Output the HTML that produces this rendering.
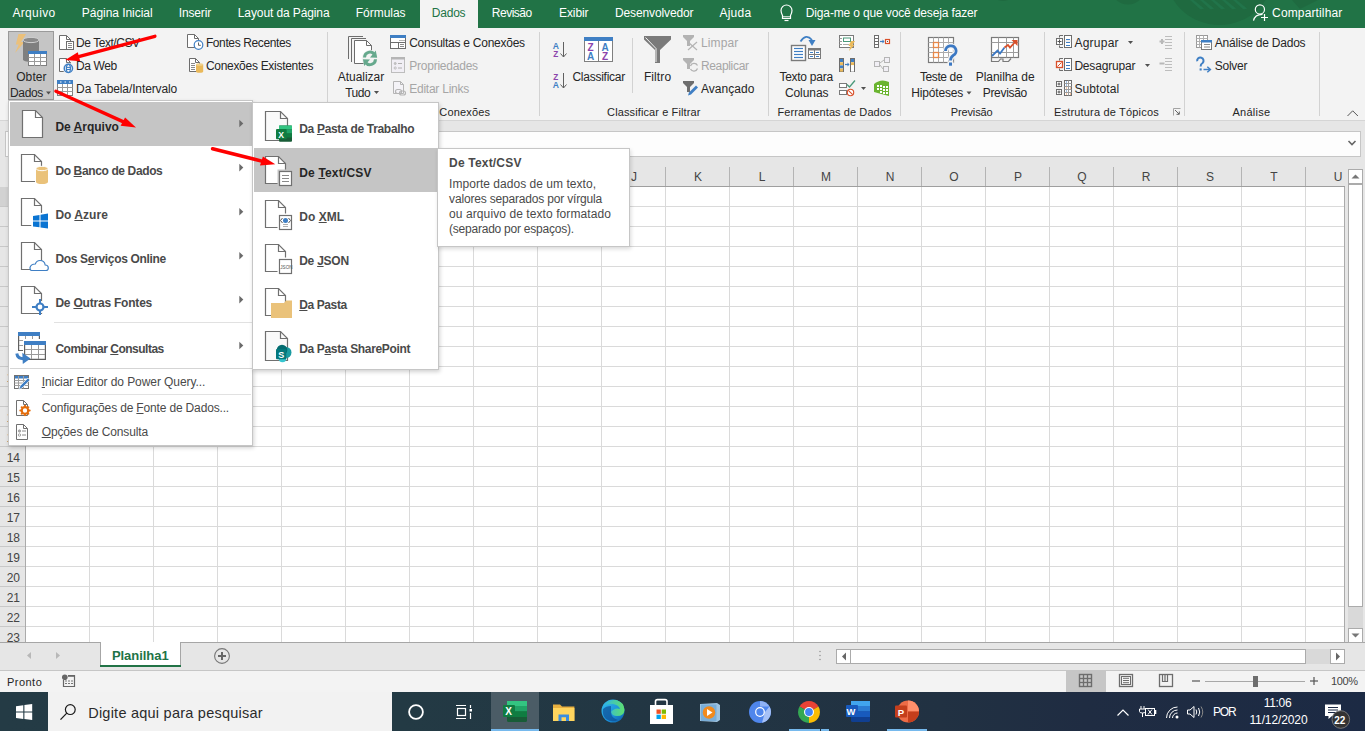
<!DOCTYPE html>
<html><head><meta charset="utf-8"><title>Excel</title><style>
*{margin:0;padding:0;box-sizing:border-box}
html,body{width:1365px;height:731px;overflow:hidden;background:#fff}
body{position:relative;font-family:"Liberation Sans",sans-serif;font-size:12px;color:#262626}
.a{position:absolute}
.t{position:absolute;white-space:nowrap;line-height:1}
svg{position:absolute;overflow:visible}
u{text-decoration:underline;text-underline-offset:1px;text-decoration-thickness:1px}
</style></head>
<body>
<div class="a" style="left:0px;top:0px;width:1365px;height:28px;background:#217346"></div>
<svg style="left:0;top:0" width="1365" height="27" viewBox="0 0 1365 27"><circle cx="1219.5" cy="-30" r="55" fill="#1f6a40"/><path d="M1190 0H1193.5L1204 8.5Q1202 9.5 1200 9Z" fill="#21744a"/><path d="M1200 0H1203.5L1214 8.5Q1212 9.5 1210 9Z" fill="#21744a"/><path d="M1211 0H1214.5L1225 8.5Q1223 9.5 1221 9Z" fill="#21744a"/><path d="M1222 0H1225.5L1236 8.5Q1234 9.5 1232 9Z" fill="#21744a"/><path d="M1233 0H1236.5L1247 8.5Q1245 9.5 1243 9Z" fill="#21744a"/><circle cx="1128" cy="-13" r="17.5" fill="#1f6a40"/><circle cx="1003" cy="-12" r="13" fill="#1f6a40"/><path d="M1292 0H1318L1300 9Z" fill="#1f6a40"/><path d="M782.5 15.5Q781 12.5 781 10.5A5.5 5.5 0 0 1 792 10.5Q792 12.5 790.5 15.5V18.5H782.5Z" fill="none" stroke="#fff" stroke-width="1.2"/><line x1="783" y1="16.8" x2="790" y2="16.8" stroke="#fff" stroke-width="1"/><line x1="784.5" y1="20.5" x2="788.5" y2="20.5" stroke="#fff" stroke-width="1.2"/><circle cx="1259.9" cy="9.4" r="4.6" fill="none" stroke="#fff" stroke-width="1.2"/><path d="M1253.5 20.7Q1254.5 14.5 1262.5 14.3" fill="none" stroke="#fff" stroke-width="1.2"/><path d="M1261 17.5H1268M1264.5 14V21" stroke="#fff" stroke-width="1.2"/></svg>
<div class="a" style="left:420px;top:0px;width:58px;height:28px;background:#f3f3f3"></div>
<div class="t" style="left:12.40px;top:7.33px;font-size:12px;color:#fff;letter-spacing:0.352px">Arquivo</div>
<div class="t" style="left:81.80px;top:7.33px;font-size:12px;color:#fff;letter-spacing:-0.045px">Página Inicial</div>
<div class="t" style="left:178.80px;top:7.33px;font-size:12px;color:#fff;letter-spacing:-0.157px">Inserir</div>
<div class="t" style="left:237.80px;top:7.33px;font-size:12px;color:#fff;letter-spacing:-0.108px">Layout da Página</div>
<div class="t" style="left:355.80px;top:7.33px;font-size:12px;color:#fff;letter-spacing:-0.031px">Fórmulas</div>
<div class="t" style="left:491.80px;top:7.33px;font-size:12px;color:#fff;letter-spacing:-0.493px">Revisão</div>
<div class="t" style="left:559.00px;top:7.33px;font-size:12px;color:#fff;letter-spacing:-0.083px">Exibir</div>
<div class="t" style="left:615.00px;top:7.33px;font-size:12px;color:#fff;letter-spacing:-0.121px">Desenvolvedor</div>
<div class="t" style="left:719.40px;top:7.33px;font-size:12px;color:#fff;letter-spacing:0.274px">Ajuda</div>
<div class="t" style="left:805.80px;top:7.33px;font-size:12px;color:#fff;letter-spacing:-0.144px">Diga-me o que você deseja fazer</div>
<div class="t" style="left:1272.10px;top:7.33px;font-size:12px;color:#fff;letter-spacing:0.136px">Compartilhar</div>
<div class="t" style="left:431.80px;top:7.33px;font-size:12px;color:#217346;letter-spacing:-0.222px">Dados</div>
<div class="a" style="left:0px;top:28px;width:1365px;height:92px;background:#f3f3f3"></div>
<div class="a" style="left:0px;top:120px;width:1365px;height:1px;background:#d5d5d5"></div>
<div class="a" style="left:8px;top:31px;width:46px;height:69px;background:#c5c5c5;border:1px solid #9a9a9a"></div>
<div class="t" style="left:16.20px;top:70.63px;font-size:12px;letter-spacing:0.096px">Obter</div>
<div class="t" style="left:10.10px;top:86.73px;font-size:12px;letter-spacing:-0.397px">Dados</div>
<div class="t" style="left:76.10px;top:37.03px;font-size:12px;letter-spacing:-0.458px">De Text/CSV</div>
<div class="t" style="left:76.10px;top:59.73px;font-size:12px;letter-spacing:-0.408px">Da Web</div>
<div class="t" style="left:76.10px;top:82.53px;font-size:12px;letter-spacing:-0.110px">Da Tabela/Intervalo</div>
<div class="t" style="left:205.90px;top:37.03px;font-size:12px;letter-spacing:-0.387px">Fontes Recentes</div>
<div class="t" style="left:205.90px;top:59.73px;font-size:12px;letter-spacing:-0.291px">Conexões Existentes</div>
<div class="t" style="left:337.70px;top:70.63px;font-size:12px;letter-spacing:-0.023px">Atualizar</div>
<div class="t" style="left:345.20px;top:86.73px;font-size:12px;letter-spacing:-0.502px">Tudo</div>
<div class="t" style="left:409.20px;top:37.03px;font-size:12px;letter-spacing:-0.255px">Consultas e Conexões</div>
<div class="t" style="left:409.20px;top:59.73px;font-size:12px;color:#a6a6a6;letter-spacing:-0.226px">Propriedades</div>
<div class="t" style="left:409.20px;top:82.53px;font-size:12px;color:#a6a6a6;letter-spacing:-0.237px">Editar Links</div>
<div class="t" style="left:376.40px;top:106.66px;font-size:11px;letter-spacing:0.153px">Consultas e Conexões</div>
<div class="t" style="left:572.40px;top:70.63px;font-size:12px;letter-spacing:-0.244px">Classificar</div>
<div class="t" style="left:643.90px;top:70.63px;font-size:12px;letter-spacing:0.106px">Filtro</div>
<div class="t" style="left:700.90px;top:37.03px;font-size:12px;color:#a6a6a6;letter-spacing:0.143px">Limpar</div>
<div class="t" style="left:700.90px;top:59.73px;font-size:12px;color:#a6a6a6;letter-spacing:-0.325px">Reaplicar</div>
<div class="t" style="left:700.90px;top:82.53px;font-size:12px;letter-spacing:0.049px">Avançado</div>
<div class="t" style="left:607.10px;top:106.66px;font-size:11px;letter-spacing:0.111px">Classificar e Filtrar</div>
<div class="t" style="left:779.40px;top:70.63px;font-size:12px;letter-spacing:-0.261px">Texto para</div>
<div class="t" style="left:784.90px;top:86.73px;font-size:12px;letter-spacing:-0.055px">Colunas</div>
<div class="t" style="left:777.40px;top:106.66px;font-size:11px;letter-spacing:0.084px">Ferramentas de Dados</div>
<div class="t" style="left:919.90px;top:70.63px;font-size:12px;letter-spacing:-0.382px">Teste de</div>
<div class="t" style="left:911.20px;top:86.73px;font-size:12px;letter-spacing:-0.159px">Hipóteses</div>
<div class="t" style="left:975.70px;top:70.63px;font-size:12px;letter-spacing:-0.049px">Planilha de</div>
<div class="t" style="left:982.70px;top:86.73px;font-size:12px;letter-spacing:-0.298px">Previsão</div>
<div class="t" style="left:950.70px;top:106.66px;font-size:11px;letter-spacing:-0.114px">Previsão</div>
<div class="t" style="left:1074.40px;top:37.03px;font-size:12px;letter-spacing:0.249px">Agrupar</div>
<div class="t" style="left:1074.40px;top:59.73px;font-size:12px;letter-spacing:-0.189px">Desagrupar</div>
<div class="t" style="left:1074.40px;top:82.53px;font-size:12px;letter-spacing:0.122px">Subtotal</div>
<div class="t" style="left:1054.00px;top:106.66px;font-size:11px;letter-spacing:0.179px">Estrutura de Tópicos</div>
<div class="t" style="left:1214.80px;top:37.03px;font-size:12px;letter-spacing:-0.218px">Análise de Dados</div>
<div class="t" style="left:1214.80px;top:59.73px;font-size:12px;letter-spacing:-0.263px">Solver</div>
<div class="t" style="left:1232.40px;top:106.66px;font-size:11px;letter-spacing:0.287px">Análise</div>
<div class="a" style="left:327px;top:32px;width:1px;height:84px;background:#d2d2d2"></div>
<div class="a" style="left:539px;top:32px;width:1px;height:84px;background:#d2d2d2"></div>
<div class="a" style="left:768px;top:32px;width:1px;height:84px;background:#d2d2d2"></div>
<div class="a" style="left:900px;top:32px;width:1px;height:84px;background:#d2d2d2"></div>
<div class="a" style="left:1044px;top:32px;width:1px;height:84px;background:#d2d2d2"></div>
<div class="a" style="left:1184px;top:32px;width:1px;height:84px;background:#d2d2d2"></div>
<div class="a" style="left:1319px;top:32px;width:1px;height:84px;background:#d2d2d2"></div>
<div class="a" style="left:632px;top:38px;width:1px;height:55px;background:#d2d2d2"></div>
<svg style="left:0;top:27px" width="1365" height="93" viewBox="0 27 1365 93"><path d="M18.5 34H26L21 42H24.5L15 53L18.7 44.5H15.8Z" fill="#ebc07a"/><path d="M23 40V59.5A8 2.5 0 0 0 39 59.5V40Z" fill="#7f7f7f"/><ellipse cx="31" cy="40" rx="8" ry="2.6" fill="#8a8a8a" stroke="#cfcfcf" stroke-width="1"/><rect x="28.5" y="51.5" width="18" height="14" fill="#fff" stroke="#7f7f7f" stroke-width="1"/><rect x="28" y="51" width="19" height="3" fill="#3f7fc4"/><line x1="34.5" y1="54" x2="34.5" y2="66" stroke="#9a9a9a" stroke-width="1" stroke-linecap="butt"/><line x1="40.5" y1="54" x2="40.5" y2="66" stroke="#9a9a9a" stroke-width="1" stroke-linecap="butt"/><line x1="28.5" y1="57.5" x2="46.5" y2="57.5" stroke="#9a9a9a" stroke-width="1" stroke-linecap="butt"/><line x1="28.5" y1="61.5" x2="46.5" y2="61.5" stroke="#9a9a9a" stroke-width="1" stroke-linecap="butt"/><path d="M46.0 91.5H51.0L48.5 94.5Z" fill="#505050"/><path d="M59.5 35.5H66.5L70.5 39.5V49.5H59.5Z" fill="#fff" stroke="#6d6d6d" stroke-width="1"/><path d="M66.5 35.5V39.5H70.5" fill="none" stroke="#6d6d6d" stroke-width="1"/><rect x="66.5" y="41.5" width="7" height="8" fill="#fff" stroke="#6d6d6d" stroke-width="1"/><line x1="68" y1="43.5" x2="72" y2="43.5" stroke="#8a8a8a" stroke-width="1" stroke-linecap="butt"/><line x1="68" y1="45.5" x2="72" y2="45.5" stroke="#8a8a8a" stroke-width="1" stroke-linecap="butt"/><line x1="68" y1="47.5" x2="72" y2="47.5" stroke="#8a8a8a" stroke-width="1" stroke-linecap="butt"/><path d="M59.5 58.5H66.5L70.5 62.5V71.5H59.5Z" fill="#fff" stroke="#6d6d6d" stroke-width="1"/><path d="M66.5 58.5V62.5H70.5" fill="none" stroke="#6d6d6d" stroke-width="1"/><circle cx="68.4" cy="68.4" r="5.6" fill="#f3f3f3"/><circle cx="68.4" cy="68.4" r="4.1" fill="#fff" stroke="#3f7fc4" stroke-width="1.5"/><ellipse cx="68.4" cy="68.4" rx="2" ry="4.1" fill="none" stroke="#3f7fc4" stroke-width="1.2"/><line x1="66" y1="67.4" x2="70.8" y2="67.4" stroke="#3f7fc4" stroke-width="1.1" stroke-linecap="butt"/><line x1="66" y1="69.5" x2="70.8" y2="69.5" stroke="#3f7fc4" stroke-width="1.1" stroke-linecap="butt"/><rect x="57.5" y="80.5" width="15" height="15" fill="#fff" stroke="#7f7f7f" stroke-width="1"/><rect x="57" y="80" width="16" height="4" fill="#3f7fc4"/><rect x="60" y="81.5" width="1.5" height="1" fill="#fff"/><rect x="64.5" y="81.5" width="1.5" height="1" fill="#fff"/><rect x="69" y="81.5" width="1.5" height="1" fill="#fff"/><line x1="62.5" y1="84" x2="62.5" y2="96" stroke="#9a9a9a" stroke-width="1" stroke-linecap="butt"/><line x1="67.5" y1="84" x2="67.5" y2="96" stroke="#9a9a9a" stroke-width="1" stroke-linecap="butt"/><line x1="57.5" y1="87.5" x2="72.5" y2="87.5" stroke="#9a9a9a" stroke-width="1" stroke-linecap="butt"/><line x1="57.5" y1="91.5" x2="72.5" y2="91.5" stroke="#9a9a9a" stroke-width="1" stroke-linecap="butt"/><path d="M187.5 34.5H194.5L198.5 38.5V47.5H187.5Z" fill="#fff" stroke="#6d6d6d" stroke-width="1"/><path d="M194.5 34.5V38.5H198.5" fill="none" stroke="#6d6d6d" stroke-width="1"/><circle cx="198.5" cy="45" r="4.3" fill="#fff" stroke="#3f7fc4" stroke-width="1.2"/><path d="M198.5 42.5V45.3H200.8" fill="none" stroke="#505050" stroke-width="0.9"/><path d="M189.5 58.5H195.5L199.5 62.5V71.5H189.5Z" fill="#fff" stroke="#6d6d6d" stroke-width="1"/><path d="M195.5 58.5V62.5H199.5" fill="none" stroke="#6d6d6d" stroke-width="1"/><line x1="191" y1="63.5" x2="195" y2="63.5" stroke="#8a8a8a" stroke-width="1" stroke-linecap="butt"/><line x1="191" y1="65.5" x2="195" y2="65.5" stroke="#8a8a8a" stroke-width="1" stroke-linecap="butt"/><line x1="191" y1="67.5" x2="195" y2="67.5" stroke="#8a8a8a" stroke-width="1" stroke-linecap="butt"/><line x1="191" y1="69.5" x2="195" y2="69.5" stroke="#8a8a8a" stroke-width="1" stroke-linecap="butt"/><path d="M196 64.5V71.5A3.6 1.3 0 0 0 203.2 71.5V64.5Z" fill="#eab95a"/><ellipse cx="199.6" cy="64.5" rx="3.6" ry="1.3" fill="#f0d08a"/><path d="M348.5 59V36.5H363" fill="none" stroke="#6d6d6d" stroke-width="1"/><path d="M351.5 62V38.5H366" fill="none" stroke="#6d6d6d" stroke-width="1"/><path d="M354.5 40.5H366.5L371.5 45.5V63.5H354.5Z" fill="#fff" stroke="#6d6d6d" stroke-width="1"/><path d="M366.5 40.5V45.5H371.5" fill="none" stroke="#6d6d6d" stroke-width="1"/><circle cx="370" cy="58.4" r="8.3" fill="#f3f3f3"/><path d="M364.5 57.5A5.5 5.5 0 0 1 374.5 54.5" fill="none" stroke="#66a98d" stroke-width="3"/><path d="M375.8 50.5L377.2 57.8L370 57.6Z" fill="#66a98d"/><path d="M375.5 59.3A5.5 5.5 0 0 1 365.5 62.3" fill="none" stroke="#66a98d" stroke-width="3"/><path d="M364.2 66L362.9 59.2L370 59.4Z" fill="#66a98d"/><path d="M374.0 91.0H379.0L376.5 94.0Z" fill="#505050"/><rect x="390.5" y="35.5" width="15" height="13" fill="#fff" stroke="#6d6d6d" stroke-width="1"/><rect x="390" y="35" width="16" height="3" fill="#3f7fc4"/><line x1="390.5" y1="42.5" x2="405.5" y2="42.5" stroke="#6d6d6d" stroke-width="1" stroke-linecap="butt"/><line x1="398.5" y1="42.5" x2="398.5" y2="48.5" stroke="#6d6d6d" stroke-width="1" stroke-linecap="butt"/><rect x="399.5" y="40" width="1" height="1" fill="#6d6d6d"/><rect x="401.5" y="40" width="1" height="1" fill="#6d6d6d"/><rect x="403.5" y="40" width="1" height="1" fill="#6d6d6d"/><line x1="400" y1="44.5" x2="404" y2="44.5" stroke="#8a8a8a" stroke-width="1" stroke-linecap="butt"/><line x1="400" y1="46.5" x2="404" y2="46.5" stroke="#8a8a8a" stroke-width="1" stroke-linecap="butt"/><rect x="391.5" y="57.5" width="13" height="15" fill="#f1eff5" stroke="#bdbdbd" stroke-width="1"/><rect x="391" y="57" width="14" height="2.5" fill="#b5b5b5"/><circle cx="395.2" cy="63.5" r="1.1" fill="#c3c3c3" stroke="#b0b0b0" stroke-width=".6"/><circle cx="395.2" cy="68" r="1.1" fill="none" stroke="#b0b0b0" stroke-width=".8"/><line x1="398" y1="63.5" x2="402" y2="63.5" stroke="#b0b0b0" stroke-width="1" stroke-linecap="butt"/><line x1="398" y1="68" x2="402" y2="68" stroke="#b0b0b0" stroke-width="1" stroke-linecap="butt"/><path d="M393.5 81.5H400.5L403.5 84.5V93.5H393.5Z" fill="#f4f3f7" stroke="#b5b5b5" stroke-width="1"/><path d="M400.5 81.5V84.5H403.5" fill="none" stroke="#b5b5b5" stroke-width="1"/><rect x="395.5" y="89.5" width="6" height="4" rx="2" fill="none" stroke="#b5b5b5" stroke-width="1.2"/><rect x="399.5" y="91" width="6" height="4" rx="2" fill="none" stroke="#b5b5b5" stroke-width="1.2"/><text x="552.8" y="48.8" font-family="Liberation Sans" font-size="8.6" font-weight="700" fill="#3f7fc4">A</text><text x="553.2" y="56.9" font-family="Liberation Sans" font-size="8.2" font-weight="700" fill="#8b44ac">Z</text><line x1="563.5" y1="42" x2="563.5" y2="57" stroke="#606060" stroke-width="1" stroke-linecap="butt"/><path d="M560.5 53.5L563.5 57L566.5 53.5" fill="none" stroke="#606060"/><text x="553.2" y="79.6" font-family="Liberation Sans" font-size="8.2" font-weight="700" fill="#8b44ac">Z</text><text x="552.8" y="87.7" font-family="Liberation Sans" font-size="8.6" font-weight="700" fill="#3f7fc4">A</text><line x1="563.5" y1="73" x2="563.5" y2="88" stroke="#606060" stroke-width="1" stroke-linecap="butt"/><path d="M560.5 84.5L563.5 88L566.5 84.5" fill="none" stroke="#606060"/><rect x="584.5" y="37.5" width="28" height="24" fill="#fff" stroke="#7f7f7f" stroke-width="1"/><rect x="584" y="37" width="29" height="4" fill="#3f7fc4"/><line x1="598.5" y1="41" x2="598.5" y2="61.5" stroke="#7f7f7f" stroke-width="1" stroke-linecap="butt"/><text x="587.5" y="50.5" font-family="Liberation Sans" font-size="10" font-weight="700" fill="#8b44ac">Z</text><text x="587" y="60" font-family="Liberation Sans" font-size="10" font-weight="700" fill="#3f7fc4">A</text><text x="601.5" y="50.5" font-family="Liberation Sans" font-size="10" font-weight="700" fill="#3f7fc4">A</text><text x="602" y="60" font-family="Liberation Sans" font-size="10" font-weight="700" fill="#8b44ac">Z</text><path d="M644 36H671V39.5L660 50V63H655V50L644 39.5Z" fill="#7a7a7a"/><path d="M645.5 37.5L656 48.5V62" fill="none" stroke="#fff" stroke-width="0.9"/><path d="M683 35H694V37L690 41V46H687V41L683 37Z" fill="#b3b3b3"/><line x1="688" y1="42" x2="697" y2="50" stroke="#b3b3b3" stroke-width="1.2" stroke-linecap="butt"/><line x1="697" y1="42" x2="688" y2="50" stroke="#b3b3b3" stroke-width="1.2" stroke-linecap="butt"/><path d="M683 58H694V60L690 64V69H687V64L683 60Z" fill="#b3b3b3"/><path d="M690.5 66A3.8 3.8 0 0 1 697.5 65.5M697.5 68.5A3.8 3.8 0 0 1 690.5 69" fill="none" stroke="#b3b3b3" stroke-width="1.3"/><path d="M683 81H694V83L690 87V92H687V87L683 83Z" fill="#6d6d6d"/><path d="M689 92.5L696 85.5L698 87.5L691 94.5L688 95.5Z" fill="#3f7fc4"/><rect x="791.5" y="45.5" width="14" height="15" fill="#fff" stroke="#7a7a7a" stroke-width="1.4"/><line x1="794" y1="48.5" x2="803" y2="48.5" stroke="#3f7fc4" stroke-width="1.2" stroke-linecap="butt"/><line x1="794" y1="51.5" x2="803" y2="51.5" stroke="#3f7fc4" stroke-width="1.2" stroke-linecap="butt"/><line x1="794" y1="54.5" x2="803" y2="54.5" stroke="#3f7fc4" stroke-width="1.2" stroke-linecap="butt"/><line x1="794" y1="57.5" x2="803" y2="57.5" stroke="#3f7fc4" stroke-width="1.2" stroke-linecap="butt"/><rect x="808.5" y="48.5" width="12" height="10" fill="#fff" stroke="#7a7a7a" stroke-width="1"/><rect x="808" y="48" width="13" height="2.5" fill="#7a7a7a"/><line x1="814.5" y1="50" x2="814.5" y2="58.5" stroke="#7a7a7a" stroke-width="1" stroke-linecap="butt"/><line x1="808.5" y1="54.5" x2="820.5" y2="54.5" stroke="#7a7a7a" stroke-width="1" stroke-linecap="butt"/><line x1="810" y1="52.5" x2="813" y2="52.5" stroke="#3f7fc4" stroke-width="1" stroke-linecap="butt"/><line x1="816" y1="52.5" x2="819" y2="52.5" stroke="#3f7fc4" stroke-width="1" stroke-linecap="butt"/><line x1="810" y1="56.5" x2="813" y2="56.5" stroke="#3f7fc4" stroke-width="1" stroke-linecap="butt"/><line x1="816" y1="56.5" x2="819" y2="56.5" stroke="#3f7fc4" stroke-width="1" stroke-linecap="butt"/><path d="M800.5 41.5Q806 33 812 40" fill="none" stroke="#3f7fc4" stroke-width="1.8"/><path d="M808.5 40L812 46L815.5 40Z" fill="#3f7fc4"/><rect x="839.5" y="35.5" width="14" height="12" fill="#fff" stroke="#7a7a7a" stroke-width="1"/><line x1="839.5" y1="38.5" x2="842" y2="38.5" stroke="#9a9a9a" stroke-width="1" stroke-linecap="butt"/><line x1="839.5" y1="41.5" x2="842" y2="41.5" stroke="#9a9a9a" stroke-width="1" stroke-linecap="butt"/><line x1="839.5" y1="44.5" x2="842" y2="44.5" stroke="#9a9a9a" stroke-width="1" stroke-linecap="butt"/><rect x="843.5" y="38" width="7" height="3.5" fill="none" stroke="#4a9a7a" stroke-width="1"/><line x1="843" y1="44.5" x2="849" y2="44.5" stroke="#aaaaaa" stroke-width="1" stroke-linecap="butt"/><path d="M851 41H855L852.5 45H854.5L849 51L850.5 46H848.5Z" fill="#eab95a"/><rect x="839.5" y="58.5" width="4" height="13" fill="#fff" stroke="#6d6d6d" stroke-width="1"/><rect x="840" y="59.0" width="3" height="3" fill="#3f7fc4"/><rect x="840" y="62.2" width="3" height="3" fill="#eab95a"/><rect x="840" y="65.4" width="3" height="3" fill="#3f7fc4"/><rect x="840" y="68.6" width="3" height="3" fill="#eab95a"/><rect x="850.5" y="58.5" width="4" height="13" fill="#fff" stroke="#6d6d6d" stroke-width="1"/><rect x="851" y="59.0" width="3" height="3" fill="#3f7fc4"/><rect x="851" y="62.2" width="3" height="3" fill="#eab95a"/><rect x="851" y="65.4" width="3" height="3" fill="#fff"/><rect x="851" y="68.6" width="3" height="3" fill="#fff"/><line x1="845" y1="64.5" x2="849" y2="64.5" stroke="#3f7fc4" stroke-width="1.2" stroke-linecap="butt"/><path d="M847.5 62.5L849.5 64.5L847.5 66.5Z" fill="#3f7fc4"/><rect x="839.5" y="83.5" width="7" height="4" fill="#fff" stroke="#7a7a7a" stroke-width="1"/><rect x="839.5" y="90.5" width="7" height="4" fill="#fff" stroke="#7a7a7a" stroke-width="1"/><path d="M847 84.5L849.5 87L855 80.5" fill="none" stroke="#4a9a7a" stroke-width="1.3"/><circle cx="850.5" cy="92.5" r="3.2" fill="#fff" stroke="#d9502a" stroke-width="1.1"/><line x1="848.3" y1="90.3" x2="852.7" y2="94.7" stroke="#d9502a" stroke-width="1.1" stroke-linecap="butt"/><path d="M861.0 87.0H866.0L863.5 90.0Z" fill="#505050"/><rect x="874.5" y="35.5" width="4" height="12" fill="#fff" stroke="#6d6d6d" stroke-width="1"/><line x1="874.5" y1="38.5" x2="878.5" y2="38.5" stroke="#6d6d6d" stroke-width="1" stroke-linecap="butt"/><line x1="874.5" y1="41.5" x2="878.5" y2="41.5" stroke="#6d6d6d" stroke-width="1" stroke-linecap="butt"/><line x1="874.5" y1="44.5" x2="878.5" y2="44.5" stroke="#6d6d6d" stroke-width="1" stroke-linecap="butt"/><line x1="880" y1="41.5" x2="884" y2="41.5" stroke="#3f7fc4" stroke-width="1.2" stroke-linecap="butt"/><path d="M882.5 39.5L884.5 41.5L882.5 43.5Z" fill="#3f7fc4"/><rect x="885.5" y="39.5" width="4" height="4" fill="#fff" stroke="#d9502a" stroke-width="1.2"/><rect x="887" y="41" width="1" height="1" fill="#555"/><rect x="874.5" y="61.5" width="5" height="5" fill="#f1eff5" stroke="#b5b5b5" stroke-width="1"/><rect x="884.5" y="57.5" width="5" height="5" fill="#f1eff5" stroke="#b5b5b5" stroke-width="1"/><rect x="883.5" y="66.5" width="5" height="5" fill="#f1eff5" stroke="#b5b5b5" stroke-width="1"/><line x1="880" y1="63" x2="884" y2="60" stroke="#b5b5b5" stroke-width="1" stroke-linecap="butt"/><line x1="880" y1="65" x2="883" y2="69" stroke="#b5b5b5" stroke-width="1" stroke-linecap="butt"/><path d="M874 84Q881 78 889 82V96Q881 94 874 92Z" fill="#6ab42f"/><rect x="877" y="85" width="2" height="2" fill="#fff"/><rect x="880" y="85" width="2" height="2" fill="#fff"/><rect x="883" y="86" width="2" height="2" fill="#fff"/><rect x="886" y="86" width="2" height="2" fill="#fff"/><rect x="877" y="88" width="2" height="2" fill="#fff"/><rect x="880" y="88" width="2" height="2" fill="#fff"/><rect x="883" y="89" width="2" height="2" fill="#fff"/><rect x="886" y="89" width="2" height="2" fill="#fff"/><rect x="880" y="91" width="2" height="2" fill="#fff"/><rect x="883" y="92" width="2" height="2" fill="#fff"/><rect x="886" y="92" width="2" height="2" fill="#fff"/><rect x="928.5" y="37.5" width="25" height="25" fill="#fff" stroke="#7a7a7a" stroke-width="1.2"/><line x1="933.5" y1="37.5" x2="933.5" y2="62.5" stroke="#ababab" stroke-width="1" stroke-linecap="butt"/><line x1="938.5" y1="37.5" x2="938.5" y2="62.5" stroke="#ababab" stroke-width="1" stroke-linecap="butt"/><line x1="943.5" y1="37.5" x2="943.5" y2="62.5" stroke="#ababab" stroke-width="1" stroke-linecap="butt"/><line x1="948.5" y1="37.5" x2="948.5" y2="62.5" stroke="#ababab" stroke-width="1" stroke-linecap="butt"/><line x1="928.5" y1="42.5" x2="953.5" y2="42.5" stroke="#ababab" stroke-width="1" stroke-linecap="butt"/><line x1="928.5" y1="47.5" x2="953.5" y2="47.5" stroke="#ababab" stroke-width="1" stroke-linecap="butt"/><line x1="928.5" y1="52.5" x2="953.5" y2="52.5" stroke="#ababab" stroke-width="1" stroke-linecap="butt"/><line x1="928.5" y1="57.5" x2="953.5" y2="57.5" stroke="#ababab" stroke-width="1" stroke-linecap="butt"/><rect x="933.5" y="42.5" width="5" height="5" fill="#fff" stroke="#e8894a" stroke-width="1.3"/><rect x="933.5" y="52.5" width="5" height="5" fill="#fff" stroke="#e8894a" stroke-width="1.3"/><path d="M945.5 51A5.3 5 0 1 1 953.3 55.3Q950.5 57.3 950.5 60.5" fill="none" stroke="#f3f3f3" stroke-width="5.5"/><rect x="947.5" y="61.5" width="6" height="5" fill="#f3f3f3"/><path d="M945.5 51A5.3 5 0 1 1 953.3 55.3Q950.5 57.3 950.5 60.5" fill="none" stroke="#3b78c3" stroke-width="2.8"/><rect x="949" y="62.5" width="3" height="3.2" fill="#3b78c3"/><path d="M966.5 91.5H971.5L969 94.5Z" fill="#505050"/><rect x="991.5" y="37.5" width="27" height="20" fill="#fff" stroke="#7a7a7a" stroke-width="1.2"/><line x1="998.5" y1="37.5" x2="998.5" y2="57.5" stroke="#9d9d9d" stroke-width="1" stroke-linecap="butt"/><line x1="1006.5" y1="37.5" x2="1006.5" y2="57.5" stroke="#9d9d9d" stroke-width="1" stroke-linecap="butt"/><line x1="1013.5" y1="37.5" x2="1013.5" y2="57.5" stroke="#9d9d9d" stroke-width="1" stroke-linecap="butt"/><line x1="991.5" y1="42.5" x2="1018.5" y2="42.5" stroke="#9d9d9d" stroke-width="1" stroke-linecap="butt"/><line x1="991.5" y1="52.5" x2="1018.5" y2="52.5" stroke="#9d9d9d" stroke-width="1" stroke-linecap="butt"/><path d="M991.5 58V61.5H998.5L1000.5 59H1003V61.5H1008.5L1011 58.5" fill="none" stroke="#7a7a7a" stroke-width="1.2"/><path d="M992 56L997.5 50.5L1000 53.5L1004.5 47.5" fill="none" stroke="#3b78c3" stroke-width="1.8"/><path d="M1004.5 47.5L1008 45L1010 47.5L1016 41" fill="none" stroke="#d9502a" stroke-width="1.8"/><path d="M1011.5 40H1017.5V46Z" fill="#d9502a"/><rect x="1056.5" y="38.5" width="6" height="6" fill="#fff" stroke="#6d6d6d" stroke-width="1"/><line x1="1057.5" y1="41.5" x2="1061.5" y2="41.5" stroke="#555" stroke-width="1" stroke-linecap="butt"/><line x1="1059.5" y1="39.5" x2="1059.5" y2="43.5" stroke="#555" stroke-width="1" stroke-linecap="butt"/><path d="M1059.5 37.5V35.5H1063M1059.5 45.5V47.5H1063" fill="none" stroke="#6d6d6d"/><rect x="1064.5" y="35.5" width="7" height="12" fill="#fff" stroke="#6d6d6d" stroke-width="1"/><line x1="1066" y1="39.5" x2="1070" y2="39.5" stroke="#3f7fc4" stroke-width="1" stroke-linecap="butt"/><line x1="1066" y1="42.5" x2="1070" y2="42.5" stroke="#3f7fc4" stroke-width="1" stroke-linecap="butt"/><line x1="1066" y1="45.5" x2="1070" y2="45.5" stroke="#3f7fc4" stroke-width="1" stroke-linecap="butt"/><line x1="1064.5" y1="41.0" x2="1071.5" y2="41.0" stroke="#bbb" stroke-width="0.5" stroke-linecap="butt"/><path d="M1128.0 41.0H1133.0L1130.5 44.0Z" fill="#505050"/><rect x="1056.5" y="61.5" width="6" height="6" fill="#fff" stroke="#d9502a" stroke-width="1.3"/><line x1="1057.5" y1="66.5" x2="1061.5" y2="62.5" stroke="#d9502a" stroke-width="1" stroke-linecap="butt"/><path d="M1059.5 60.5V58.5H1063M1059.5 68.5V70.5H1063" fill="none" stroke="#6d6d6d"/><rect x="1064.5" y="58.5" width="7" height="12" fill="#fff" stroke="#6d6d6d" stroke-width="1"/><line x1="1066" y1="62.5" x2="1070" y2="62.5" stroke="#3f7fc4" stroke-width="1" stroke-linecap="butt"/><line x1="1066" y1="65.5" x2="1070" y2="65.5" stroke="#3f7fc4" stroke-width="1" stroke-linecap="butt"/><line x1="1066" y1="68.5" x2="1070" y2="68.5" stroke="#3f7fc4" stroke-width="1" stroke-linecap="butt"/><path d="M1145.0 64.0H1150.0L1147.5 67.0Z" fill="#505050"/><rect x="1056.5" y="81.5" width="5" height="5" fill="#fff" stroke="#6d6d6d" stroke-width="1"/><line x1="1057.5" y1="84" x2="1060.5" y2="84" stroke="#555" stroke-width="1" stroke-linecap="butt"/><line x1="1059" y1="82.5" x2="1059" y2="85.5" stroke="#555" stroke-width="1" stroke-linecap="butt"/><rect x="1056.5" y="89.5" width="5" height="5" fill="#fff" stroke="#6d6d6d" stroke-width="1"/><line x1="1057.5" y1="92" x2="1060.5" y2="92" stroke="#555" stroke-width="1" stroke-linecap="butt"/><line x1="1059" y1="90.5" x2="1059" y2="93.5" stroke="#555" stroke-width="1" stroke-linecap="butt"/><rect x="1064.5" y="80.5" width="7" height="15" fill="#fff" stroke="#6d6d6d" stroke-width="1"/><line x1="1068.5" y1="80.5" x2="1068.5" y2="95.5" stroke="#9d9d9d" stroke-width="1" stroke-linecap="butt"/><line x1="1064.5" y1="83.5" x2="1071.5" y2="83.5" stroke="#9d9d9d" stroke-width="1" stroke-linecap="butt"/><line x1="1064.5" y1="86.5" x2="1071.5" y2="86.5" stroke="#9d9d9d" stroke-width="1" stroke-linecap="butt"/><line x1="1064.5" y1="89.5" x2="1071.5" y2="89.5" stroke="#9d9d9d" stroke-width="1" stroke-linecap="butt"/><line x1="1064.5" y1="92.5" x2="1071.5" y2="92.5" stroke="#9d9d9d" stroke-width="1" stroke-linecap="butt"/><rect x="1066" y="81.5" width="1" height="1" fill="#3f7fc4"/><rect x="1066" y="84.5" width="1" height="1" fill="#3f7fc4"/><rect x="1066" y="87.5" width="1" height="1" fill="#e8894a"/><rect x="1070" y="87.5" width="1" height="1" fill="#e8894a"/><rect x="1066" y="90.5" width="1" height="1" fill="#3f7fc4"/><rect x="1066" y="93.5" width="1" height="1" fill="#e8894a"/><rect x="1070" y="93.5" width="1" height="1" fill="#e8894a"/><line x1="1159.5" y1="41.5" x2="1164.5" y2="41.5" stroke="#b8b8b8" stroke-width="2" stroke-linecap="butt"/><line x1="1162" y1="39" x2="1162" y2="44" stroke="#b8b8b8" stroke-width="2" stroke-linecap="butt"/><line x1="1165" y1="36.5" x2="1172" y2="36.5" stroke="#bdbdbd" stroke-width="1" stroke-linecap="butt"/><line x1="1165" y1="39.5" x2="1172" y2="39.5" stroke="#bdbdbd" stroke-width="1" stroke-linecap="butt"/><line x1="1165" y1="42.5" x2="1172" y2="42.5" stroke="#bdbdbd" stroke-width="1" stroke-linecap="butt"/><line x1="1165" y1="45.5" x2="1172" y2="45.5" stroke="#bdbdbd" stroke-width="1" stroke-linecap="butt"/><line x1="1165" y1="48.5" x2="1172" y2="48.5" stroke="#bdbdbd" stroke-width="1" stroke-linecap="butt"/><line x1="1159.5" y1="63.5" x2="1164.5" y2="63.5" stroke="#b8b8b8" stroke-width="2" stroke-linecap="butt"/><line x1="1165" y1="58.5" x2="1172" y2="58.5" stroke="#bdbdbd" stroke-width="1" stroke-linecap="butt"/><line x1="1165" y1="61.5" x2="1172" y2="61.5" stroke="#bdbdbd" stroke-width="1" stroke-linecap="butt"/><line x1="1165" y1="64.5" x2="1172" y2="64.5" stroke="#bdbdbd" stroke-width="1" stroke-linecap="butt"/><line x1="1165" y1="67.5" x2="1172" y2="67.5" stroke="#bdbdbd" stroke-width="1" stroke-linecap="butt"/><line x1="1165" y1="70.5" x2="1172" y2="70.5" stroke="#bdbdbd" stroke-width="1" stroke-linecap="butt"/><path d="M1173.5 115.5V108.5H1180.5" fill="none" stroke="#9a9a9a" stroke-width=".9"/><line x1="1175" y1="110" x2="1179" y2="114" stroke="#555" stroke-width="0.9" stroke-linecap="butt"/><path d="M1176.5 114.3H1179.3V111.5" fill="none" stroke="#555" stroke-width=".9"/><rect x="1196.5" y="35.5" width="11" height="12" fill="#fff" stroke="#9a9a9a" stroke-width="1"/><line x1="1199.5" y1="35.5" x2="1199.5" y2="47.5" stroke="#b0b0b0" stroke-width="1" stroke-linecap="butt"/><line x1="1203.5" y1="35.5" x2="1203.5" y2="47.5" stroke="#b0b0b0" stroke-width="1" stroke-linecap="butt"/><line x1="1196.5" y1="38.5" x2="1207.5" y2="38.5" stroke="#b0b0b0" stroke-width="1" stroke-linecap="butt"/><line x1="1196.5" y1="41.5" x2="1207.5" y2="41.5" stroke="#b0b0b0" stroke-width="1" stroke-linecap="butt"/><line x1="1196.5" y1="44.5" x2="1207.5" y2="44.5" stroke="#b0b0b0" stroke-width="1" stroke-linecap="butt"/><rect x="1201.5" y="40.5" width="10" height="9" fill="#fff" stroke="#7a7a7a" stroke-width="1"/><rect x="1201" y="40" width="11" height="2.5" fill="#3f7fc4"/><line x1="1204" y1="44.5" x2="1210" y2="44.5" stroke="#8a8a8a" stroke-width="1" stroke-linecap="butt"/><line x1="1204" y1="47" x2="1210" y2="47" stroke="#8a8a8a" stroke-width="1" stroke-linecap="butt"/><path d="M1197.2 61.3A3.2 3.2 0 1 1 1202.6 63Q1200.6 64.2 1200.6 66.5" fill="none" stroke="#3f7fc4" stroke-width="2"/><rect x="1199.6" y="68.4" width="2.1" height="2.1" fill="#3f7fc4"/><line x1="1203.5" y1="69.5" x2="1210" y2="69.5" stroke="#3f7fc4" stroke-width="1.5" stroke-linecap="butt"/><path d="M1207.3 66.7L1210.4 69.5L1207.3 72.3" fill="none" stroke="#3f7fc4" stroke-width="1.5"/><path d="M1347.5 116L1352.7 110.8L1357.9 116" fill="none" stroke="#555" stroke-width="1"/></svg>
<div class="a" style="left:0px;top:121px;width:1365px;height:36px;background:#e6e6e6"></div>
<div class="a" style="left:5px;top:131px;width:1356px;height:26px;background:#fdfdfd;border:1px solid #c6c6c6"></div>
<div class="a" style="left:0px;top:157px;width:1345px;height:30px;background:#e6e6e6"></div>
<div class="a" style="left:26px;top:186px;width:1319px;height:1px;background:#9f9f9f"></div>
<div class="a" style="left:89px;top:167px;width:1px;height:19px;background:#b4b4b4"></div>
<div class="t" style="left:26px;width:64px;text-align:center;top:171.33px;font-size:12px;color:#444">A</div>
<div class="a" style="left:153px;top:167px;width:1px;height:19px;background:#b4b4b4"></div>
<div class="t" style="left:90px;width:64px;text-align:center;top:171.33px;font-size:12px;color:#444">B</div>
<div class="a" style="left:217px;top:167px;width:1px;height:19px;background:#b4b4b4"></div>
<div class="t" style="left:154px;width:64px;text-align:center;top:171.33px;font-size:12px;color:#444">C</div>
<div class="a" style="left:281px;top:167px;width:1px;height:19px;background:#b4b4b4"></div>
<div class="t" style="left:218px;width:64px;text-align:center;top:171.33px;font-size:12px;color:#444">D</div>
<div class="a" style="left:345px;top:167px;width:1px;height:19px;background:#b4b4b4"></div>
<div class="t" style="left:282px;width:64px;text-align:center;top:171.33px;font-size:12px;color:#444">E</div>
<div class="a" style="left:409px;top:167px;width:1px;height:19px;background:#b4b4b4"></div>
<div class="t" style="left:346px;width:64px;text-align:center;top:171.33px;font-size:12px;color:#444">F</div>
<div class="a" style="left:473px;top:167px;width:1px;height:19px;background:#b4b4b4"></div>
<div class="t" style="left:410px;width:64px;text-align:center;top:171.33px;font-size:12px;color:#444">G</div>
<div class="a" style="left:537px;top:167px;width:1px;height:19px;background:#b4b4b4"></div>
<div class="t" style="left:474px;width:64px;text-align:center;top:171.33px;font-size:12px;color:#444">H</div>
<div class="a" style="left:601px;top:167px;width:1px;height:19px;background:#b4b4b4"></div>
<div class="t" style="left:538px;width:64px;text-align:center;top:171.33px;font-size:12px;color:#444">I</div>
<div class="a" style="left:665px;top:167px;width:1px;height:19px;background:#b4b4b4"></div>
<div class="t" style="left:602px;width:64px;text-align:center;top:171.33px;font-size:12px;color:#444">J</div>
<div class="a" style="left:729px;top:167px;width:1px;height:19px;background:#b4b4b4"></div>
<div class="t" style="left:666px;width:64px;text-align:center;top:171.33px;font-size:12px;color:#444">K</div>
<div class="a" style="left:793px;top:167px;width:1px;height:19px;background:#b4b4b4"></div>
<div class="t" style="left:730px;width:64px;text-align:center;top:171.33px;font-size:12px;color:#444">L</div>
<div class="a" style="left:857px;top:167px;width:1px;height:19px;background:#b4b4b4"></div>
<div class="t" style="left:794px;width:64px;text-align:center;top:171.33px;font-size:12px;color:#444">M</div>
<div class="a" style="left:921px;top:167px;width:1px;height:19px;background:#b4b4b4"></div>
<div class="t" style="left:858px;width:64px;text-align:center;top:171.33px;font-size:12px;color:#444">N</div>
<div class="a" style="left:985px;top:167px;width:1px;height:19px;background:#b4b4b4"></div>
<div class="t" style="left:922px;width:64px;text-align:center;top:171.33px;font-size:12px;color:#444">O</div>
<div class="a" style="left:1049px;top:167px;width:1px;height:19px;background:#b4b4b4"></div>
<div class="t" style="left:986px;width:64px;text-align:center;top:171.33px;font-size:12px;color:#444">P</div>
<div class="a" style="left:1113px;top:167px;width:1px;height:19px;background:#b4b4b4"></div>
<div class="t" style="left:1050px;width:64px;text-align:center;top:171.33px;font-size:12px;color:#444">Q</div>
<div class="a" style="left:1177px;top:167px;width:1px;height:19px;background:#b4b4b4"></div>
<div class="t" style="left:1114px;width:64px;text-align:center;top:171.33px;font-size:12px;color:#444">R</div>
<div class="a" style="left:1241px;top:167px;width:1px;height:19px;background:#b4b4b4"></div>
<div class="t" style="left:1178px;width:64px;text-align:center;top:171.33px;font-size:12px;color:#444">S</div>
<div class="a" style="left:1305px;top:167px;width:1px;height:19px;background:#b4b4b4"></div>
<div class="t" style="left:1242px;width:64px;text-align:center;top:171.33px;font-size:12px;color:#444">T</div>
<div class="a" style="left:1369px;top:167px;width:1px;height:19px;background:#b4b4b4"></div>
<div class="t" style="left:1306px;width:64px;text-align:center;top:171.33px;font-size:12px;color:#444">U</div>
<div class="a" style="left:26px;top:187px;width:1318px;height:455px;background-color:#fff;background-image:linear-gradient(to right,transparent 63px,#dadada 63px),linear-gradient(to bottom,transparent 19px,#dadada 19px);background-size:64px 100%,100% 20px"></div>
<div class="a" style="left:1344px;top:187px;width:1px;height:455px;background:#ababab"></div>
<div class="a" style="left:0px;top:187px;width:26px;height:455px;background:#e6e6e6;background-image:linear-gradient(to bottom,transparent 19px,#c8c8c8 19px);background-size:100% 20px"></div>
<div class="a" style="left:25px;top:157px;width:1px;height:485px;background:#ababab"></div>
<div class="a" style="left:0px;top:187px;width:25px;height:19px;background:#d2d2d2"></div>
<div class="t" style="left:0;width:20px;text-align:right;top:192.23px;font-size:12px;color:#444">1</div>
<div class="t" style="left:0;width:20px;text-align:right;top:212.23px;font-size:12px;color:#444">2</div>
<div class="t" style="left:0;width:20px;text-align:right;top:232.23px;font-size:12px;color:#444">3</div>
<div class="t" style="left:0;width:20px;text-align:right;top:252.23px;font-size:12px;color:#444">4</div>
<div class="t" style="left:0;width:20px;text-align:right;top:272.23px;font-size:12px;color:#444">5</div>
<div class="t" style="left:0;width:20px;text-align:right;top:292.23px;font-size:12px;color:#444">6</div>
<div class="t" style="left:0;width:20px;text-align:right;top:312.23px;font-size:12px;color:#444">7</div>
<div class="t" style="left:0;width:20px;text-align:right;top:332.23px;font-size:12px;color:#444">8</div>
<div class="t" style="left:0;width:20px;text-align:right;top:352.23px;font-size:12px;color:#444">9</div>
<div class="t" style="left:0;width:20px;text-align:right;top:372.23px;font-size:12px;color:#444">10</div>
<div class="t" style="left:0;width:20px;text-align:right;top:392.23px;font-size:12px;color:#444">11</div>
<div class="t" style="left:0;width:20px;text-align:right;top:412.23px;font-size:12px;color:#444">12</div>
<div class="t" style="left:0;width:20px;text-align:right;top:432.23px;font-size:12px;color:#444">13</div>
<div class="t" style="left:0;width:20px;text-align:right;top:452.23px;font-size:12px;color:#444">14</div>
<div class="t" style="left:0;width:20px;text-align:right;top:472.23px;font-size:12px;color:#444">15</div>
<div class="t" style="left:0;width:20px;text-align:right;top:492.23px;font-size:12px;color:#444">16</div>
<div class="t" style="left:0;width:20px;text-align:right;top:512.23px;font-size:12px;color:#444">17</div>
<div class="t" style="left:0;width:20px;text-align:right;top:532.23px;font-size:12px;color:#444">18</div>
<div class="t" style="left:0;width:20px;text-align:right;top:552.23px;font-size:12px;color:#444">19</div>
<div class="t" style="left:0;width:20px;text-align:right;top:572.23px;font-size:12px;color:#444">20</div>
<div class="t" style="left:0;width:20px;text-align:right;top:592.23px;font-size:12px;color:#444">21</div>
<div class="t" style="left:0;width:20px;text-align:right;top:612.23px;font-size:12px;color:#444">22</div>
<div class="t" style="left:0;width:20px;text-align:right;top:632.23px;font-size:12px;color:#444">23</div>
<div class="a" style="left:1345px;top:157px;width:20px;height:485px;background:#e6e6e6"></div>
<div class="a" style="left:1348px;top:169px;width:15px;height:15px;background:#fff;border:1px solid #ababab"></div>
<div class="a" style="left:1348px;top:184px;width:15px;height:423px;background:#fff;border:1px solid #ababab"></div>
<div class="a" style="left:1348px;top:607px;width:15px;height:21px;background:#d9d9d9"></div>
<div class="a" style="left:0px;top:642px;width:1365px;height:28px;background:#e6e6e6;border-top:1px solid #a6a6a6"></div>
<div class="a" style="left:0px;top:670px;width:1365px;height:1px;background:#c6c6c6"></div>
<div class="a" style="left:100px;top:642px;width:81px;height:23px;background:#fff;border-left:1px solid #a6a6a6;border-right:1px solid #a6a6a6;border-top:none"></div>
<div class="a" style="left:100px;top:665px;width:81px;height:2px;background:#217346"></div>
<div class="t" style="left:111.90px;top:649.20px;font-size:13px;color:#217346;font-weight:700;letter-spacing:-0.035px">Planilha1</div>
<div class="a" style="left:836px;top:649px;width:15px;height:15px;background:#fff;border:1px solid #ababab"></div>
<div class="a" style="left:850px;top:649px;width:456px;height:15px;background:#fff;border:1px solid #ababab"></div>
<div class="a" style="left:1306px;top:649px;width:24px;height:15px;background:#d9d9d9"></div>
<div class="a" style="left:1330px;top:649px;width:15px;height:15px;background:#fff;border:1px solid #ababab"></div>
<div class="a" style="left:1348px;top:628px;width:15px;height:15px;background:#fff;border:1px solid #ababab"></div>
<div class="a" style="left:0px;top:671px;width:1365px;height:21px;background:#f3f3f3"></div>
<div class="t" style="left:6.90px;top:676.76px;font-size:11px;color:#262626;letter-spacing:0.496px">Pronto</div>
<div class="a" style="left:1066px;top:671px;width:40px;height:21px;background:#c6c6c6"></div>
<div class="t" style="left:1331.00px;top:676.06px;font-size:11px;color:#444;letter-spacing:-0.347px">100%</div>
<svg style="left:0;top:0" width="1365" height="731" viewBox="0 0 1365 731"><path d="M31 652L27 655.5L31 659Z" fill="#b8b8b8"/><path d="M56 652L60 655.5L56 659Z" fill="#b8b8b8"/><circle cx="222" cy="656" r="7.4" fill="none" stroke="#777" stroke-width="1.1"/><line x1="218" y1="656" x2="226" y2="656" stroke="#666" stroke-width="2" stroke-linecap="butt"/><line x1="222" y1="652" x2="222" y2="660" stroke="#666" stroke-width="2" stroke-linecap="butt"/><circle cx="64.8" cy="677.2" r="2.8" fill="#666"/><path d="M63.5 680V686.5H74.5V675.5H68" fill="none" stroke="#666" stroke-width="1.2"/><rect x="68" y="675" width="7" height="1.8" fill="#666"/><rect x="65" y="680.5" width="2" height="1" fill="#777"/><rect x="68" y="680.5" width="2" height="1" fill="#777"/><rect x="71" y="680.5" width="2" height="1" fill="#777"/><rect x="65" y="683" width="2" height="1" fill="#777"/><rect x="68" y="683" width="2" height="1" fill="#777"/><rect x="71" y="683" width="2" height="1" fill="#777"/><rect x="1079.5" y="674.5" width="12" height="12" fill="none" stroke="#6d6d6d" stroke-width="1.4"/><line x1="1083.5" y1="674.5" x2="1083.5" y2="686.5" stroke="#6d6d6d" stroke-width="1.3" stroke-linecap="butt"/><line x1="1087.5" y1="674.5" x2="1087.5" y2="686.5" stroke="#6d6d6d" stroke-width="1.3" stroke-linecap="butt"/><line x1="1079.5" y1="678.5" x2="1091.5" y2="678.5" stroke="#6d6d6d" stroke-width="1.3" stroke-linecap="butt"/><line x1="1079.5" y1="682.5" x2="1091.5" y2="682.5" stroke="#6d6d6d" stroke-width="1.3" stroke-linecap="butt"/><rect x="1119.5" y="674.5" width="13" height="12" fill="none" stroke="#6d6d6d" stroke-width="1.3"/><rect x="1121.5" y="676.5" width="9" height="8" fill="none" stroke="#6d6d6d" stroke-width="1"/><line x1="1123" y1="678.3" x2="1129" y2="678.3" stroke="#6d6d6d" stroke-width="1" stroke-linecap="butt"/><line x1="1123" y1="680.5" x2="1129" y2="680.5" stroke="#6d6d6d" stroke-width="1" stroke-linecap="butt"/><line x1="1123" y1="682.7" x2="1129" y2="682.7" stroke="#6d6d6d" stroke-width="1" stroke-linecap="butt"/><rect x="1159.5" y="674.5" width="13" height="12" fill="none" stroke="#6d6d6d" stroke-width="1.3"/><path d="M1162.5 674.5V681.5H1167.5V674.5M1165 674.5V681" fill="none" stroke="#6d6d6d" stroke-width="1.2"/><line x1="1192" y1="681" x2="1200" y2="681" stroke="#555" stroke-width="1.2" stroke-linecap="butt"/><line x1="1205" y1="681.5" x2="1305" y2="681.5" stroke="#a8a8a8" stroke-width="1" stroke-linecap="butt"/><rect x="1253" y="676" width="5" height="11" fill="#6d6d6d"/><line x1="1310" y1="681" x2="1318" y2="681" stroke="#555" stroke-width="1.2" stroke-linecap="butt"/><line x1="1314" y1="677" x2="1314" y2="685" stroke="#555" stroke-width="1.2" stroke-linecap="butt"/><path d="M1351.5 178.5L1355.5 174.5L1359.5 178.5Z" fill="#777"/><path d="M1351.5 633.5L1355.5 637.5L1359.5 633.5Z" fill="#777"/><circle cx="820" cy="651.5" r=".8" fill="#999"/><circle cx="820" cy="655.5" r=".8" fill="#999"/><circle cx="820" cy="659.5" r=".8" fill="#999"/><path d="M846 652.5L842 656.5L846 660.5Z" fill="#666"/><path d="M1336 652.5L1340 656.5L1336 660.5Z" fill="#666"/><path d="M1348.5 141L1352 144.5L1355.5 141" fill="none" stroke="#666" stroke-width="1.6"/></svg>
<div class="a" style="left:0px;top:692px;width:1365px;height:39px;background:linear-gradient(to right,#243b45 0px,#233a44 400px,#213142 940px,#1f2c42 1085px,#1c2a44 1365px)"></div>
<div class="a" style="left:48px;top:692px;width:344px;height:39px;background:#f2f2f2"></div>
<div class="t" style="left:88.20px;top:705.86px;font-size:14.5px;color:#2b2b2b;letter-spacing:0.239px">Digite aqui para pesquisar</div>
<div class="a" style="left:491px;top:692px;width:48px;height:39px;background:#4b5c66"></div>
<div class="a" style="left:491px;top:729px;width:48px;height:2px;background:#76b9ed"></div>
<div class="a" style="left:789px;top:729px;width:31px;height:2px;background:#76b9ed"></div>
<div class="a" style="left:821px;top:729px;width:8px;height:2px;background:#76b9ed"></div>
<div class="a" style="left:887px;top:729px;width:40px;height:2px;background:#76b9ed"></div>
<svg style="left:0;top:0" width="1365" height="731" viewBox="0 0 1365 731"><path d="M16 706.3L23.3 705.3V711.6H16ZM24.4 705.1L32.2 704V711.6H24.4ZM16 712.6H23.3V718.9L16 717.9ZM24.4 712.6H32.2V720.1L24.4 719Z" fill="#fff"/><circle cx="70.3" cy="709.6" r="4.9" fill="none" stroke="#1a1a1a" stroke-width="1.2"/><line x1="66.8" y1="713.1" x2="60.5" y2="719.6" stroke="#1a1a1a" stroke-width="1.3" stroke-linecap="butt"/><circle cx="416" cy="712" r="6.9" fill="none" stroke="#fff" stroke-width="1.8"/><path d="M456 705.5H466M456 718.5H466" stroke="#fff" stroke-width="1.2"/><rect x="457.5" y="708.5" width="8" height="7" fill="none" stroke="#fff" stroke-width="1.2"/><line x1="470.5" y1="705" x2="470.5" y2="708" stroke="#fff" stroke-width="1.2" stroke-linecap="butt"/><rect x="469.5" y="709" width="2.5" height="2.5" fill="#fff"/><line x1="470.5" y1="713" x2="470.5" y2="719" stroke="#fff" stroke-width="1.2" stroke-linecap="butt"/><rect x="507" y="701" width="20" height="21" rx="1.5" fill="#185c37"/><rect x="507" y="701" width="20" height="5" fill="#33c481"/><rect x="507" y="706" width="20" height="5.5" fill="#21a366"/><rect x="507" y="711.5" width="20" height="5.5" fill="#107c41"/><rect x="503" y="705" width="12" height="12" rx="1" fill="#107c41"/><text x="505.3" y="715.3" font-family="Liberation Sans" font-size="10" font-weight="700" fill="#fff">X</text><path d="M553 704.5H560L562 706.5H574.4V721H553Z" fill="#e8b040"/><rect x="553" y="708" width="21.4" height="13" fill="#ffd55e"/><path d="M558.5 721V714.5H569V721H566V717.3H561.5V721Z" fill="#3a8de0"/><defs><linearGradient id="eg" x1="0" y1="0" x2="1" y2="1"><stop offset="0" stop-color="#35c1f1"/><stop offset=".6" stop-color="#1b8fd8"/><stop offset="1" stop-color="#0c59a4"/></linearGradient><linearGradient id="eg2" x1="0" y1="0" x2="1" y2="0"><stop offset="0" stop-color="#2fb3e8"/><stop offset="1" stop-color="#5fe06e"/></linearGradient></defs><circle cx="613" cy="711" r="11.5" fill="url(#eg)"/><path d="M603 706Q608 699 616 700Q624 702 624.5 710Q624 716 617 716Q612 716 611 712Q615 707 620 709Q619 705 613 704Q607 704 603 706Z" fill="url(#eg2)"/><path d="M611 712Q611 718 618 720Q612 723 606 719Q602 715 603 709Q606 706 611 706Z" fill="#0e4f96" opacity=".7"/><path d="M655.5 705V701.5Q655.5 699.6 657.5 699.6H665Q667 699.6 667 701.5V705" fill="none" stroke="#fff" stroke-width="1.6"/><rect x="650" y="705" width="23" height="19" fill="#fff"/><rect x="656.5" y="709.5" width="4.3" height="4.3" fill="#f25022"/><rect x="661.7" y="709.5" width="4.3" height="4.3" fill="#7fba00"/><rect x="656.5" y="714.7" width="4.3" height="4.3" fill="#00a4ef"/><rect x="661.7" y="714.7" width="4.3" height="4.3" fill="#ffb900"/><path d="M700 704L717 703L720 705V720L717 722L700 721Z" fill="#9fc4e0"/><path d="M701 704.5H716.5V721H701Z" fill="#7aaed8"/><circle cx="709" cy="712.5" r="6.2" fill="#f28a1c"/><path d="M707 709V716L712.5 712.5Z" fill="#fff"/><circle cx="760" cy="712" r="11" fill="#4f86ec"/><path d="M760 701A11 11 0 0 1 769.5 706.5H760Z" fill="#8fb2f5"/><path d="M769.5 706.5A11 11 0 0 1 762 722.8L765 712Z" fill="#a6c1f6"/><circle cx="760" cy="712" r="4.9" fill="#fff"/><circle cx="760" cy="712" r="3.7" fill="#4f86ec"/><path d="M809 712L799.5 706.5A11 11 0 0 1 818.5 706.5Z" fill="#e94235"/><path d="M809 712L818.5 706.5A11 11 0 0 1 809 723Z" fill="#fbbc04"/><path d="M809 712L809 723A11 11 0 0 1 799.5 706.5Z" fill="#34a853"/><circle cx="809" cy="712" r="5" fill="#fff"/><circle cx="809" cy="712" r="3.9" fill="#4285f4"/><rect x="851" y="701" width="19" height="21" rx="1.5" fill="#103f91"/><rect x="851" y="701" width="19" height="5" fill="#41a5ee"/><rect x="851" y="706" width="19" height="5.5" fill="#2b7cd3"/><rect x="851" y="711.5" width="19" height="5.5" fill="#185abd"/><rect x="846" y="705" width="12" height="12" rx="1" fill="#185abd"/><text x="846.6" y="715.3" font-family="Liberation Sans" font-size="9.4" font-weight="700" fill="#fff">W</text><circle cx="908" cy="711.5" r="11" fill="#ed6c47"/><path d="M908 711.5V700.5A11 11 0 0 1 919 711.5Z" fill="#ff8f6b"/><path d="M908 711.5H919A11 11 0 0 1 908 722.5Z" fill="#c43e1c"/><rect x="895" y="705.5" width="12" height="12" rx="1" fill="#c43e1c"/><text x="897.8" y="715.5" font-family="Liberation Sans" font-size="9.6" font-weight="700" fill="#fff">P</text><path d="M1117.5 715.5L1123 710L1128.5 715.5" fill="none" stroke="#fff" stroke-width="1.2"/><path d="M1141 706V709M1144 706V709M1139.5 709H1145.5V711.5Q1145.5 713 1142.5 713Q1139.5 713 1139.5 711.5ZM1142.5 713V717" fill="none" stroke="#fff" stroke-width="1"/><rect x="1145.5" y="708.5" width="9" height="7" fill="none" stroke="#fff" stroke-width="1"/><rect x="1155" y="710" width="1.3" height="4" fill="#fff"/><line x1="1148" y1="709.5" x2="1152" y2="714.5" stroke="#fff" stroke-width="1" stroke-linecap="butt"/><line x1="1152" y1="709.5" x2="1148" y2="714.5" stroke="#fff" stroke-width="1" stroke-linecap="butt"/><path d="M1166.5 718A11 11 0 0 1 1177.5 707M1169.5 718A8 8 0 0 1 1177.5 710M1172.5 718A5 5 0 0 1 1177.5 713" fill="none" stroke="#fff" stroke-width="1"/><circle cx="1177" cy="717" r="1.5" fill="#fff"/><path d="M1187.5 710H1190L1194 706.5V717.5L1190 714H1187.5Z" fill="none" stroke="#fff" stroke-width="1"/><path d="M1196 709.5Q1197.5 712 1196 714.5M1198.5 708Q1201 712 1198.5 716" fill="none" stroke="#fff" stroke-width="1"/><path d="M1201 706.5Q1204.5 712 1201 717.5" fill="none" stroke="#888" stroke-width="1"/><path d="M1325 704.5H1341V716H1332L1328.5 719V716H1325Z" fill="#fff"/><line x1="1328" y1="707.5" x2="1338" y2="707.5" stroke="#1b2945" stroke-width="1" stroke-linecap="butt"/><line x1="1328" y1="710" x2="1338" y2="710" stroke="#1b2945" stroke-width="1" stroke-linecap="butt"/><line x1="1328" y1="712.5" x2="1338" y2="712.5" stroke="#1b2945" stroke-width="1" stroke-linecap="butt"/><circle cx="1340.8" cy="719.5" r="8.8" fill="#333" stroke="#777" stroke-width="1"/><text x="1334.3" y="724" font-family="Liberation Sans" font-size="10" font-weight="700" fill="#fff">22</text></svg>
<div class="t" style="left:1213.00px;top:705.63px;font-size:12px;color:#fff;letter-spacing:-1.208px">POR</div>
<div class="t" style="left:1263.80px;top:696.63px;font-size:12px;color:#fff;letter-spacing:-0.335px">11:06</div>
<div class="t" style="left:1249.40px;top:714.03px;font-size:12px;color:#fff;letter-spacing:-0.108px">11/12/2020</div>
<div class="a" style="left:8px;top:100px;width:245px;height:346px;background:#fff;border:1px solid #c6c6c6;box-shadow:1px 2px 4px rgba(0,0,0,.18)"></div>
<div class="a" style="left:10px;top:102px;width:242px;height:44px;background:#c5c5c5"></div>
<div class="a" style="left:54px;top:322px;width:198px;height:1px;background:#e1e1e1"></div>
<div class="a" style="left:10px;top:368px;width:242px;height:1px;background:#d5d5d5"></div>
<div class="a" style="left:42px;top:394px;width:209px;height:1px;background:#e1e1e1"></div>
<div class="t" style="left:55.40px;top:120.83px;font-size:12px;color:#262626;font-weight:700;letter-spacing:-0.007px">De <u>A</u>rquivo</div>
<div class="t" style="left:55.40px;top:165.13px;font-size:12px;color:#4a4a4a;font-weight:700;letter-spacing:-0.372px">Do <u>B</u>anco de Dados</div>
<div class="t" style="left:55.40px;top:209.03px;font-size:12px;color:#4a4a4a;font-weight:700;letter-spacing:0.024px">Do <u>A</u>zure</div>
<div class="t" style="left:55.40px;top:253.03px;font-size:12px;color:#4a4a4a;font-weight:700;letter-spacing:-0.329px">Dos S<u>e</u>rviços Online</div>
<div class="t" style="left:55.40px;top:296.83px;font-size:12px;color:#4a4a4a;font-weight:700;letter-spacing:-0.209px">De <u>O</u>utras Fontes</div>
<div class="t" style="left:55.40px;top:342.83px;font-size:12px;color:#4a4a4a;font-weight:700;letter-spacing:-0.498px">Combinar <u>C</u>onsultas</div>
<div class="t" style="left:41.70px;top:375.73px;font-size:12px;color:#4a4a4a;letter-spacing:-0.069px"><u>I</u>niciar Editor do Power Query...</div>
<div class="t" style="left:41.70px;top:401.83px;font-size:12px;color:#4a4a4a;letter-spacing:-0.161px">Configurações de <u>F</u>onte de Dados...</div>
<div class="t" style="left:41.70px;top:425.63px;font-size:12px;color:#4a4a4a;letter-spacing:-0.131px"><u>O</u>pções de Consulta</div>
<svg style="left:0;top:0" width="260" height="450" viewBox="0 0 260 450"><path d="M22.5 110.5H35.5L42.5 117.5V137.5H22.5Z" fill="#fff" stroke="#707070" stroke-width="1.2"/><path d="M35.5 110.5V117.5H42.5" fill="none" stroke="#707070" stroke-width="1.2"/><path d="M21.5 154.5H34.5L41.5 161.5V181.5H21.5Z" fill="#fff" stroke="#707070" stroke-width="1.2"/><path d="M34.5 154.5V161.5H41.5" fill="none" stroke="#707070" stroke-width="1.2"/><path d="M35 168.5V182A7 3 0 0 0 49 182V168.5Z" fill="#fff"/><path d="M36 169V182A6 2 0 0 0 48 182V169Z" fill="#eac27a"/><ellipse cx="42" cy="168.5" rx="6" ry="2.2" fill="#eac27a" stroke="#fff" stroke-width="1"/><path d="M21.5 198.5H34.5L41.5 205.5V225.5H21.5Z" fill="#fff" stroke="#707070" stroke-width="1.2"/><path d="M34.5 198.5V205.5H41.5" fill="none" stroke="#707070" stroke-width="1.2"/><path d="M32 215L48.5 212.5V229L32 227Z" fill="#fff" stroke="#fff" stroke-width="1.5"/><path d="M33 216L39.5 215V220.5H33ZM40.5 214.8L48 213.6V220.5H40.5ZM33 221.5H39.5V227.2L33 226.4ZM40.5 221.5H48V228.4L40.5 227.4Z" fill="#0a74d2"/><path d="M21.5 242.5H34.5L41.5 249.5V269.5H21.5Z" fill="#fff" stroke="#707070" stroke-width="1.2"/><path d="M34.5 242.5V249.5H41.5" fill="none" stroke="#707070" stroke-width="1.2"/><path d="M31.5 270.5H46Q48.3 270.5 48.3 268Q48.3 265 45.2 265Q44.5 260.5 40 260.5Q36.5 260.5 35.3 264Q31 264 30 267.5Q30 270.5 31.5 270.5Z" fill="#fff" stroke="#3f7fc4" stroke-width="1.2"/><path d="M21.5 286.5H34.5L41.5 293.5V313.5H21.5Z" fill="#fff" stroke="#707070" stroke-width="1.2"/><path d="M34.5 286.5V293.5H41.5" fill="none" stroke="#707070" stroke-width="1.2"/><circle cx="40" cy="307" r="6.2" fill="#fff"/><circle cx="40" cy="307" r="3.5" fill="#fff" stroke="#3f7fc4" stroke-width="2.2"/><line x1="32" y1="307" x2="36" y2="307" stroke="#3f7fc4" stroke-width="2" stroke-linecap="butt"/><line x1="44" y1="307" x2="48" y2="307" stroke="#3f7fc4" stroke-width="2" stroke-linecap="butt"/><line x1="40" y1="299" x2="40" y2="303" stroke="#3f7fc4" stroke-width="2" stroke-linecap="butt"/><line x1="40" y1="311" x2="40" y2="315" stroke="#3f7fc4" stroke-width="2" stroke-linecap="butt"/><path d="M18.6 336V350.5H23" fill="none" stroke="#606060" stroke-width="1.2"/><rect x="18" y="332" width="22" height="4" fill="#3f7fc4"/><line x1="25.5" y1="336" x2="25.5" y2="339" stroke="#9a9a9a" stroke-width="1" stroke-linecap="butt"/><line x1="32.5" y1="336" x2="32.5" y2="339" stroke="#9a9a9a" stroke-width="1" stroke-linecap="butt"/><line x1="39.4" y1="336" x2="39.4" y2="339" stroke="#606060" stroke-width="1.2" stroke-linecap="butt"/><line x1="19" y1="340.5" x2="23" y2="340.5" stroke="#9a9a9a" stroke-width="1" stroke-linecap="butt"/><line x1="19" y1="345.5" x2="23" y2="345.5" stroke="#9a9a9a" stroke-width="1" stroke-linecap="butt"/><path d="M24.6 345V359.4H45.4V345" fill="#fff" stroke="#606060" stroke-width="1.2"/><rect x="24" y="341" width="22" height="4" fill="#3f7fc4"/><line x1="31.5" y1="345" x2="31.5" y2="359" stroke="#9a9a9a" stroke-width="1" stroke-linecap="butt"/><line x1="38.5" y1="345" x2="38.5" y2="359" stroke="#9a9a9a" stroke-width="1" stroke-linecap="butt"/><line x1="25" y1="349.5" x2="45" y2="349.5" stroke="#9a9a9a" stroke-width="1" stroke-linecap="butt"/><line x1="25" y1="354.5" x2="45" y2="354.5" stroke="#9a9a9a" stroke-width="1" stroke-linecap="butt"/><path d="M16.8 353.5Q17.5 359 24.5 358.7" fill="none" stroke="#3f7fc4" stroke-width="3"/><path d="M22.3 352.8L30.5 358.6L22.8 364Z" fill="#3f7fc4"/><rect x="14.5" y="375.5" width="14" height="13" fill="#fff" stroke="#707070" stroke-width="1"/><rect x="15" y="376" width="13" height="2.5" fill="#3f7fc4"/><line x1="14.5" y1="380.5" x2="28.5" y2="380.5" stroke="#a0a0a0" stroke-width="1" stroke-linecap="butt"/><line x1="14.5" y1="383" x2="28.5" y2="383" stroke="#a0a0a0" stroke-width="1" stroke-linecap="butt"/><line x1="14.5" y1="385.5" x2="28.5" y2="385.5" stroke="#a0a0a0" stroke-width="1" stroke-linecap="butt"/><line x1="18.5" y1="376" x2="18.5" y2="388.5" stroke="#a0a0a0" stroke-width="1" stroke-linecap="butt"/><line x1="23.5" y1="376" x2="23.5" y2="388.5" stroke="#a0a0a0" stroke-width="1" stroke-linecap="butt"/><path d="M19 389.5L20 386L28 378L30 380L22 388Z" fill="#3f7fc4" stroke="#fff" stroke-width=".6"/><path d="M16.5 400.5H23.5L27.5 404.5V415.5H16.5Z" fill="#fff" stroke="#707070" stroke-width="1"/><path d="M23.5 400.5V404.5H27.5" fill="none" stroke="#707070" stroke-width="1"/><circle cx="25" cy="410.5" r="3.3" fill="none" stroke="#e46c0a" stroke-width="2.2"/><circle cx="29.60" cy="410.50" r="1.1" fill="#e46c0a"/><circle cx="28.25" cy="413.75" r="1.1" fill="#e46c0a"/><circle cx="25.00" cy="415.10" r="1.1" fill="#e46c0a"/><circle cx="21.75" cy="413.75" r="1.1" fill="#e46c0a"/><circle cx="20.40" cy="410.50" r="1.1" fill="#e46c0a"/><circle cx="21.75" cy="407.25" r="1.1" fill="#e46c0a"/><circle cx="25.00" cy="405.90" r="1.1" fill="#e46c0a"/><circle cx="28.25" cy="407.25" r="1.1" fill="#e46c0a"/><path d="M16.5 424.5H23.5L27.5 428.5V439.5H16.5Z" fill="#fff" stroke="#707070" stroke-width="1"/><path d="M23.5 424.5V428.5H27.5" fill="none" stroke="#707070" stroke-width="1"/><circle cx="19.5" cy="431" r="1.2" fill="#b0b0b0" stroke="#8a8a8a" stroke-width=".6"/><circle cx="19.5" cy="435" r="1.2" fill="none" stroke="#8a8a8a" stroke-width=".8"/><line x1="22" y1="431" x2="26" y2="431" stroke="#8a8a8a" stroke-width="1" stroke-linecap="butt"/><line x1="22" y1="435" x2="26" y2="435" stroke="#8a8a8a" stroke-width="1" stroke-linecap="butt"/><path d="M239.3 119.7L243.3 123.5L239.3 127.3Z" fill="#6a6a6a"/><path d="M239.3 163.79999999999998L243.3 167.6L239.3 171.4Z" fill="#6a6a6a"/><path d="M239.3 207.89999999999998L243.3 211.7L239.3 215.5Z" fill="#6a6a6a"/><path d="M239.3 251.89999999999998L243.3 255.7L239.3 259.5Z" fill="#6a6a6a"/><path d="M239.3 295.8L243.3 299.6L239.3 303.40000000000003Z" fill="#6a6a6a"/><path d="M239.3 341.7L243.3 345.5L239.3 349.3Z" fill="#6a6a6a"/></svg>
<div class="a" style="left:252px;top:102px;width:187px;height:268px;background:#fff;border:1px solid #c6c6c6;box-shadow:1px 2px 4px rgba(0,0,0,.18)"></div>
<div class="a" style="left:254px;top:148px;width:184px;height:44px;background:#c5c5c5"></div>
<div class="t" style="left:299.20px;top:123.03px;font-size:12px;color:#4a4a4a;font-weight:700;letter-spacing:-0.315px">Da <u>P</u>asta de Trabalho</div>
<div class="t" style="left:299.20px;top:166.63px;font-size:12px;color:#262626;font-weight:700;letter-spacing:0.173px">De <u>T</u>ext/CSV</div>
<div class="t" style="left:299.20px;top:210.73px;font-size:12px;color:#4a4a4a;font-weight:700;letter-spacing:0.046px">Do <u>X</u>ML</div>
<div class="t" style="left:299.20px;top:254.83px;font-size:12px;color:#4a4a4a;font-weight:700;letter-spacing:-0.243px">De <u>J</u>SON</div>
<div class="t" style="left:299.20px;top:298.83px;font-size:12px;color:#4a4a4a;font-weight:700;letter-spacing:-0.386px"><u>D</u>a Pasta</div>
<div class="t" style="left:299.20px;top:343.03px;font-size:12px;color:#4a4a4a;font-weight:700;letter-spacing:-0.338px">Da P<u>a</u>sta SharePoint</div>
<svg style="left:0;top:0" width="300" height="380" viewBox="0 0 300 380"><path d="M265.5 111.5H280.5L287.5 118.5V140.5H265.5Z" fill="#fafafa" stroke="#707070" stroke-width="1.2"/><path d="M280.5 111.5V118.5H287.5" fill="none" stroke="#707070" stroke-width="1.2"/><rect x="279" y="125.5" width="13" height="16.3" rx="1" fill="#185c37"/><rect x="279" y="125.5" width="13" height="4" fill="#33c481"/><rect x="279" y="129.5" width="13" height="4" fill="#21a366"/><rect x="279" y="133.5" width="13" height="4" fill="#107c41"/><rect x="276" y="129" width="10.7" height="10.2" rx="1" fill="#107c41"/><text x="278.2" y="137.6" font-family="Liberation Sans" font-size="8.6" font-weight="700" fill="#fff">X</text><path d="M265.5 156.5H278.5L285.5 163.5V183.5H265.5Z" fill="#fff" stroke="#707070" stroke-width="1.2"/><path d="M278.5 156.5V163.5H285.5" fill="none" stroke="#707070" stroke-width="1.2"/><rect x="277.5" y="169.5" width="16" height="17" fill="#c5c5c5"/><rect x="279.5" y="171.5" width="12" height="14" fill="#fff" stroke="#707070" stroke-width="1.2"/><line x1="282" y1="175.5" x2="289" y2="175.5" stroke="#8a8a8a" stroke-width="1" stroke-linecap="butt"/><line x1="282" y1="178.5" x2="289" y2="178.5" stroke="#8a8a8a" stroke-width="1" stroke-linecap="butt"/><line x1="282" y1="181.5" x2="289" y2="181.5" stroke="#8a8a8a" stroke-width="1" stroke-linecap="butt"/><path d="M265.5 200.5H278.5L285.5 207.5V227.5H265.5Z" fill="#fff" stroke="#707070" stroke-width="1.2"/><path d="M278.5 200.5V207.5H285.5" fill="none" stroke="#707070" stroke-width="1.2"/><rect x="277.5" y="213.5" width="16" height="17" fill="#fff"/><rect x="279.5" y="215.5" width="12" height="14" fill="#fff" stroke="#707070" stroke-width="1.2"/><circle cx="285.5" cy="220.5" r="2.5" fill="#3f7fc4"/><path d="M282.5 218L280.5 220.5L282.5 223M288.5 218L290.5 220.5L288.5 223" fill="none" stroke="#555" stroke-width="1"/><line x1="283" y1="224.5" x2="288" y2="224.5" stroke="#9a9a9a" stroke-width="0.8" stroke-linecap="butt"/><line x1="283" y1="226.5" x2="288" y2="226.5" stroke="#9a9a9a" stroke-width="0.8" stroke-linecap="butt"/><path d="M265.5 244.5H278.5L285.5 251.5V271.5H265.5Z" fill="#fff" stroke="#707070" stroke-width="1.2"/><path d="M278.5 244.5V251.5H285.5" fill="none" stroke="#707070" stroke-width="1.2"/><rect x="277.5" y="257.5" width="16" height="17" fill="#fff"/><rect x="279.5" y="259.5" width="12" height="14" fill="#fff" stroke="#707070" stroke-width="1.2"/><rect x="280" y="263.5" width="11" height="5" fill="#fff"/><text x="280.3" y="268.5" font-family="Liberation Sans" font-size="4.6" font-weight="400" fill="#555">JSON</text><path d="M265.5 288.5H278.5L285.5 295.5V315.5H265.5Z" fill="#fff" stroke="#707070" stroke-width="1.2"/><path d="M278.5 288.5V295.5H285.5" fill="none" stroke="#707070" stroke-width="1.2"/><path d="M271 303H284L286 300.5H292V318H271Z" fill="#eac27a"/><path d="M265.5 331.5H280.5L287.5 338.5V360.5H265.5Z" fill="#fafafa" stroke="#707070" stroke-width="1.2"/><path d="M280.5 331.5V338.5H287.5" fill="none" stroke="#707070" stroke-width="1.2"/><circle cx="286" cy="352.5" r="5.5" fill="#1a9ba1"/><circle cx="282.5" cy="358.5" r="3.8" fill="#37c6d0"/><circle cx="282" cy="350" r="5.3" fill="#036c70"/><rect x="276" y="349" width="10.3" height="10.3" rx="1" fill="#03787c"/><text x="278.3" y="357.7" font-family="Liberation Sans" font-size="9" font-weight="700" fill="#fff">S</text></svg>
<div class="a" style="left:437px;top:148px;width:193px;height:99px;background:#fff;border:1px solid #c6c6c6;box-shadow:1px 2px 4px rgba(0,0,0,.15)"></div>
<div class="t" style="left:449.10px;top:156.93px;font-size:12px;color:#4a4a4a;font-weight:700;letter-spacing:0.183px">De Text/CSV</div>
<div class="t" style="left:449.10px;top:177.73px;font-size:12px;color:#4a4a4a;letter-spacing:0.032px">Importe dados de um texto,</div>
<div class="t" style="left:449.10px;top:192.93px;font-size:12px;color:#4a4a4a;letter-spacing:-0.182px">valores separados por vírgula</div>
<div class="t" style="left:449.10px;top:207.83px;font-size:12px;color:#4a4a4a;letter-spacing:0.084px">ou arquivo de texto formatado</div>
<div class="t" style="left:449.10px;top:222.93px;font-size:12px;color:#4a4a4a;letter-spacing:-0.235px">(separado por espaços).</div>
<svg style="left:0;top:0" width="300" height="200" viewBox="0 0 300 200"><line x1="154.9" y1="36.3" x2="74.9" y2="57.7" stroke="#ff0000" stroke-width="3.4" stroke-linecap="round"/><path d="M65.2 59.9L77.8 52.2L80.2 61.2Z" fill="#ff0000"/><line x1="55.9" y1="91.3" x2="126.8" y2="123.4" stroke="#ff0000" stroke-width="3.4" stroke-linecap="round"/><path d="M136 127.4L125.1 117.6L120.6 125.8Z" fill="#ff0000"/><line x1="212.6" y1="148.7" x2="265.6" y2="162.1" stroke="#ff0000" stroke-width="3.5" stroke-linecap="round"/><path d="M275.3 164.3L262.9 156.6L260 165.6Z" fill="#ff0000"/></svg>
</body></html>
